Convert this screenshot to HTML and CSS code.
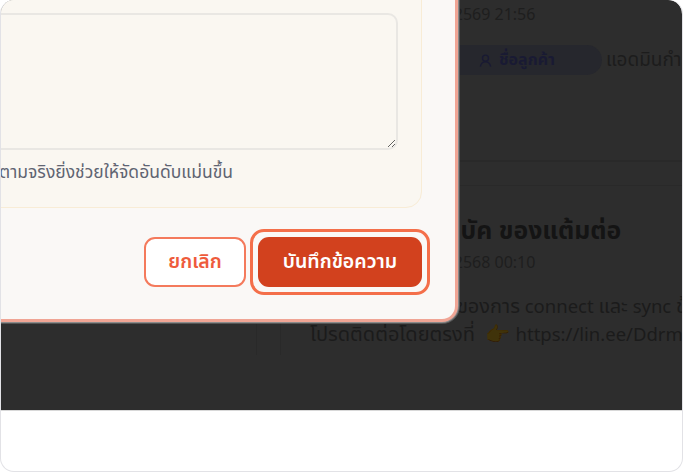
FILE: index.html
```html
<!DOCTYPE html>
<html lang="th">
<head>
<meta charset="utf-8">
<title>บันทึกข้อความ</title>
<link rel="stylesheet" href="styles.css">
</head>
<body>
<div class="frame">
  <div class="backdrop">
    <div class="feed">
      <div class="entry-top">
        <div class="stamp">วันอังคาร 12 มกราคม 2569 21:56</div>
        <div class="tags">
          <span class="pill">
            <svg class="pill-icon" viewBox="0 0 16 16" aria-hidden="true"><circle cx="8" cy="5.500" r="3.200"/><path d="M2.500 14.500c.6-3 2.600-5 5.500-5s4.900 2 5.500 5"/></svg>
            ชื่อลูกค้า
          </span>
          <span class="tag-note">แอดมินกำลังตอบกลับข้อความ</span>
        </div>
      </div>
      <div class="entry-bottom">
        <div class="avatar"></div>
        <div class="entry-text">
          <h2 class="title">ประกาศการแก้บัค ของแต้มต่อ</h2>
          <div class="stamp stamp-two">วันอังคาร 12 มกราคม 2568 00:10</div>
          <p class="body"><span class="th">ขณะนี้ยังพบปัญหาของการ</span> connect <span class="th">และ</span> sync <span class="th">ข้อมูล</span><br><span class="th">โปรดติดต่อโดยตรงที่</span> <span class="hand">👉</span> https://lin.ee/Ddrmabc</p>
        </div>
      </div>
    </div>
  </div>
  <div class="modal">
    <div class="panel">
      <textarea class="field" aria-label="ข้อความ"></textarea>
      <p class="hint">เขียนตามจริงยิ่งช่วยให้จัดอันดับแม่นขึ้น</p>
    </div>
    <div class="actions">
      <button class="btn btn-ghost" type="button">ยกเลิก</button>
      <button class="btn btn-primary" type="button">บันทึกข้อความ</button>
    </div>
  </div>
</div>
</body>
</html>
```
FILE: styles.css
```css
* { box-sizing: border-box; }
html, body { margin: 0; padding: 0; }
body { width: 683px; height: 472px; overflow: hidden; background: #fff; font-family: "Noto Sans Thai", "Noto Sans", "Noto Sans CJK SC", sans-serif; }
.frame { position: relative; width: 683px; height: 472px; background: #fff; border: 1px solid #e2e2e6; border-top: 0; border-radius: 14px; overflow: hidden; }
.backdrop { height: 411px; background: #2d2d2d; border-top-right-radius: 14px; border-bottom: 1px solid #d8d8d8; overflow: hidden; }
.feed { width: 700px; margin-left: 255px; color: #1b1b1b; }
.entry-top { height: 162px; padding: 5px 0 0 54px; border-bottom: 2px solid #292929; }
.stamp { font-size: 16px; color: #1e1e1e; line-height: 20px; white-space: nowrap; }
.tags { display: flex; align-items: center; gap: 4px; margin-top: 20px; }
.pill { display: inline-flex; align-items: center; gap: 6px; height: 30px; padding: 0 47px 0 168px; border-radius: 15px; background: #26272d; color: #191a33; font-size: 16px; font-weight: 700; white-space: nowrap; }
.pill-icon { width: 15px; height: 15px; fill: none; stroke: #191a33; stroke-width: 1.500; }
.tag-note { font-size: 19px; color: #1c1c1c; white-space: nowrap; }
.entry-bottom { display: flex; gap: 29px; margin-top: 23px; border-top: 1px solid #292929; padding-top: 30px; }
.avatar { flex: none; width: 25px; height: 139px; border: 1px solid #292929; border-width: 0 1px; }
.entry-text { flex: 1; }
.title { margin: 0; font-size: 24.800px; line-height: 32px; font-weight: 700; color: #141414; white-space: nowrap; }
.stamp-two { margin-top: 5px; }
.body { margin: 20px 0 0; font-size: 18.500px; line-height: 28px; color: #1b1b1b; white-space: nowrap; }
.th { font-size: 20px; }
.hand { display: inline-block; width: 26px; margin-left: 5px; font-size: 20px; filter: brightness(.25); }
.modal { position: absolute; left: -100px; top: -200px; width: 557px; height: 522px; padding: 0 33px 0 28px; display: flex; flex-direction: column; justify-content: flex-end; background: #faf8f6; border: 3px solid #f0a595; border-radius: 16px; box-shadow: 0 0 0 1px #8a8a8a, 0 0 0 2px #555; }
.panel { height: 340px; margin-bottom: 29px; padding: 144px 23px 0 20px; background: #faf7f1; border: 1px solid #f8ecd6; border-radius: 16px; }
.field { display: block; width: 100%; height: 137px; background: #faf7f1; border: 2px solid #e9e7e3; border-radius: 10px; resize: vertical; outline: none; }
.hint { margin: 12px 0 0; padding-right: 165px; text-align: right; font-size: 17.500px; line-height: 22px; color: #5f6472; white-space: nowrap; }
.actions { display: flex; justify-content: flex-end; gap: 12px; margin-bottom: 32px; }
.btn { height: 50px; font-family: inherit; font-size: 19.500px; font-weight: 600; border-radius: 11px; cursor: pointer; white-space: nowrap; }
.btn-ghost { width: 102px; background: #fff; color: #ee5b3c; border: 2px solid #f47a5c; }
.btn-primary { position: relative; width: 164px; background: #d2411e; color: #fff; border: 0; }
.btn-primary::after { content: ""; position: absolute; inset: -8px; border: 3.500px solid #f46f4a; border-radius: 14px; }
```
